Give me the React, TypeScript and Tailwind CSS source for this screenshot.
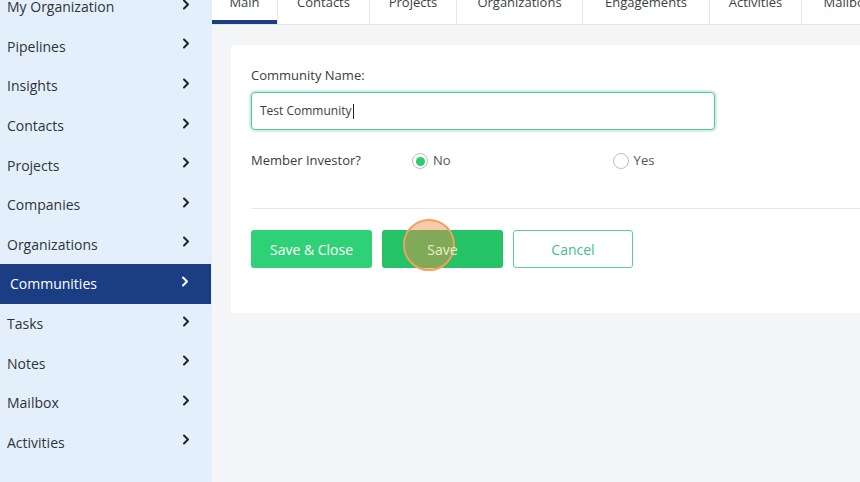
import { useState } from "react";

const navItems = [
  "My Organization",
  "Pipelines",
  "Insights",
  "Contacts",
  "Projects",
  "Companies",
  "Organizations",
  "Communities",
  "Tasks",
  "Notes",
  "Mailbox",
  "Activities",
];

const tabs = [
  { label: "Main", w: "w-[65px]" },
  { label: "Contacts", w: "w-[92px]" },
  { label: "Projects", w: "w-[87px]" },
  { label: "Organizations", w: "w-[126px]" },
  { label: "Engagements", w: "w-[127px]" },
  { label: "Activities", w: "w-[92px]" },
  { label: "Mailbox", w: "w-[92px]" },
];

function Chevron({ className }: { className?: string }) {
  return (
    <svg width="8" height="11" viewBox="0 0 8 11" fill="none" className={className}>
      <path d="M2 1.5 L6 5.5 L2 9.5" stroke="currentColor" strokeWidth="2" strokeLinecap="round" strokeLinejoin="round" />
    </svg>
  );
}

export default function App() {
  const [investor, setInvestor] = useState("no");

  return (
    <div className="flex h-[482px] w-[860px] overflow-hidden bg-[#f4f5f7] font-['Open_Sans',sans-serif]">
      <aside className="w-[212px] shrink-0 bg-[#e3f0fc]">
        <ul className="-mt-[13px]">
          {navItems.map((item) => {
            const active = item === "Communities";
            return (
              <li
                key={item}
                className={`flex h-[39.6px] items-center justify-between pr-[22px] text-[14px] ${
                  active ? "w-[211px] bg-[#1a3d83] pl-[10px] text-white" : "pl-[7px] text-[#2f3338]"
                }`}
              >
                <span>{item}</span>
                <Chevron className={`-mt-[5px] ${active ? "text-white" : "text-[#222]"}`} />
              </li>
            );
          })}
        </ul>
      </aside>

      <main className="flex-1 min-w-0">
        <div className="-mt-[22px] flex h-[47px] border-b border-[#e3e5e9] bg-white">
          {tabs.map((t, i) => (
            <div
              key={t.label}
              className={`relative flex shrink-0 items-center justify-center pt-[4px] text-[13px] text-[#3b3f44] ${t.w} ${
                i > 0 ? "border-l border-[#e3e5e9]" : ""
              }`}
            >
              {t.label}
              {i === 0 && <span className="absolute bottom-0 left-0 right-0 h-[4px] bg-[#1a3d83]" />}
            </div>
          ))}
        </div>

        <div className="pl-[19px] pt-[20px]">
          <div className="h-[268px] rounded-l-[3px] bg-white pl-[20px] pt-[20px]">
            <label className="block text-[13px] leading-[20px] text-[#3a3d42]">Community Name:</label>
            <div className="mt-[7px] flex h-[38px] w-[464px] items-center rounded-[4px] border-[1.5px] border-[#56c2a4] px-[8px] shadow-[0_0_0_2px_rgba(120,215,190,0.35)]">
              <span className="text-[12px] text-[#3d4045]">Test Community</span>
              <span className="ml-[1px] h-[15px] w-px bg-[#222]" />
            </div>

            <div className="mt-[21px] flex h-[20px] items-center text-[13px] text-[#3a3d42]">
              <span className="w-[161px]">Member Investor?</span>
              <button className="flex items-center gap-[5px]" onClick={() => setInvestor("no")}>
                <span className="flex h-[16px] w-[16px] items-center justify-center rounded-full border border-[#bdbdbd] bg-white">
                  {investor === "no" && <span className="h-[9px] w-[9px] rounded-full bg-[#2ecc71]" />}
                </span>
                <span className="text-[#555]">No</span>
              </button>
              <button className="ml-[162px] flex items-center gap-[5px]" onClick={() => setInvestor("yes")}>
                <span className="flex h-[16px] w-[16px] items-center justify-center rounded-full border border-[#bdbdbd] bg-white">
                  {investor === "yes" && <span className="h-[9px] w-[9px] rounded-full bg-[#2ecc71]" />}
                </span>
                <span className="text-[#555]">Yes</span>
              </button>
            </div>

            <div className="mt-[37px] h-px bg-[#e6e8eb]" />

            <div className="mt-[21px] flex gap-[10px]">
              <button className="h-[38px] w-[121px] rounded-[3px] bg-[#2fd176] text-[14px] text-white">Save &amp; Close</button>
              <button className="relative h-[38px] w-[121px] rounded-[3px] bg-[#25c266] text-[14px] text-[#e7f0c8]">
                <span className="absolute left-[21px] top-[-11px] h-[52px] w-[52px] rounded-full border-2 border-[#f0a060] bg-[rgba(240,140,70,0.45)]" />
                <span className="relative">Save</span>
              </button>
              <button className="h-[38px] w-[120px] rounded-[3px] border border-[#5fcf91] bg-white text-[14px] text-[#3fbf86]">Cancel</button>
            </div>
          </div>
        </div>
      </main>
    </div>
  );
}
